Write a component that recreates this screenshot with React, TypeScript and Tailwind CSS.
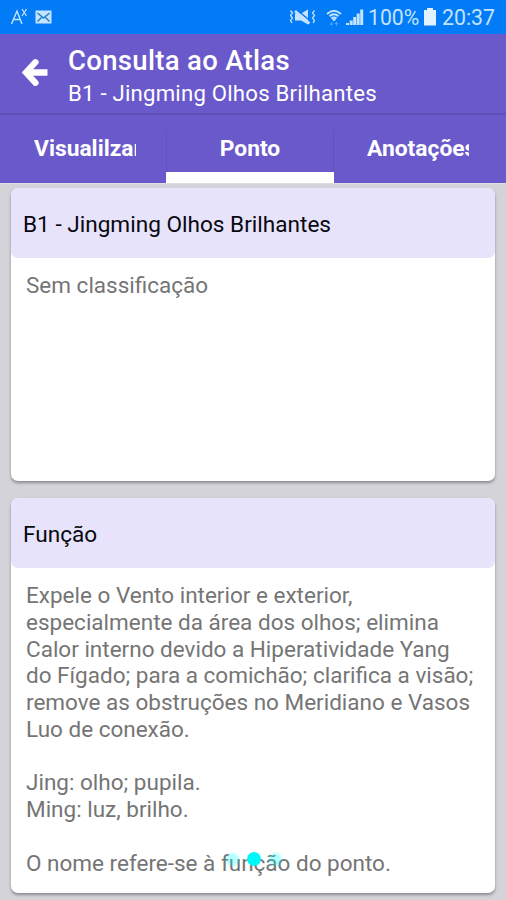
const functionLines = [
  "Expele o Vento interior e exterior,",
  "especialmente da área dos olhos; elimina",
  "Calor interno devido a Hiperatividade Yang",
  "do Fígado; para a comichão; clarifica a visão;",
  "remove as obstruções no Meridiano e Vasos",
  "Luo de conexão.",
  "",
  "Jing: olho; pupila.",
  "Ming: luz, brilho.",
  "",
  "O nome refere-se à função do ponto.",
];

function StatusBar() {
  return (
    <div className="flex h-[34px] shrink-0 items-center bg-[#027bf6] text-[#c3e3ff]">
      <svg className="ml-[10px]" width="19" height="18" viewBox="0 0 19 18" fill="none" stroke="currentColor">
        <path d="M1.500 16 7 3l5 13M3.500 11.500h7" strokeWidth="1.4" />
        <path d="m12 1 4.500 7m0-7L12 8" strokeWidth="1.3" />
      </svg>
      <svg className="ml-[6px]" width="17" height="14" viewBox="0 0 17 14">
        <rect x="0.5" y="0.5" width="16" height="13" fill="currentColor" />
        <path d="m2.500 3 6 5 6-5M2.500 11.500l4-4m8 4-4-4" fill="none" stroke="#247fca" strokeWidth="1.5" />
      </svg>
      <svg className="ml-auto" width="27" height="18" viewBox="0 0 27 18" fill="none" stroke="currentColor">
        <path
          d="M1.500 2.500 3.500 5l-2 2.500 2 2.500-2 2.500L3 15M25.500 2.500l-2 2.500 2 2.500-2 2.500 2 2.500L24 15"
          strokeWidth="1.3"
        />
        <path d="M6 5.500h6l7-4v15l-7-4H6z" fill="currentColor" stroke="none" />
        <path d="m8 2 14 11.500" stroke="#027bf6" strokeWidth="1.500" />
        <path d="m6 3 14.500 12.500" strokeWidth="2.500" />
      </svg>
      <svg className="ml-[9px]" width="18" height="19" viewBox="0 0 18 19" fill="none" stroke="currentColor">
        <path d="M2 6q7-6.500 14 0M4.500 8.300q4.500-4 9 0M6.500 10.500q2.500-2.200 5 0" strokeWidth="1.900" />
        <path d="m6.500 10.500 2.500 3 2.500-3z" fill="currentColor" stroke="none" />
        <path
          d="M6.500 14v3m-1.500-1.500 1.500 1.500L8 15.500M11.500 18v-3.500M10 16l1.500-1.500L13 16"
          strokeWidth="0.9"
          opacity="0.45"
        />
      </svg>
      <svg className="ml-[3px]" width="18" height="18" viewBox="0 0 18 18" fill="currentColor">
        <path d="M0 15h3v2H0zM3.700 12.500h3V17h-3zM7.200 9h3v8h-3zM10.700 5.500h3V17h-3zM14.200 1.500h3V17h-3z" />
      </svg>
      <span className="ml-[4px] w-[53px] whitespace-nowrap pt-px text-[21.200px] leading-none">100%</span>
      <svg className="ml-[3px]" width="12" height="18" viewBox="0 0 12 18" fill="#e2f2ff">
        <path d="M3 0h6v2h3v15.500H0V2h3z" />
      </svg>
      <span className="mr-[10px] ml-[6px] w-[54px] whitespace-nowrap pt-px text-[21.300px] leading-none">20:37</span>
    </div>
  );
}

function Header() {
  return (
    <header className="flex h-[79px] shrink-0 bg-[#6a59cb] text-white">
      <svg className="mt-[23px] ml-[21px] shrink-0" width="28" height="31" viewBox="0 0 28 31" fill="none" stroke="white">
        <path d="M26.500 15.500H6" strokeWidth="6.500" />
        <path d="M14.500 5.200 5 15.500l9.500 10.300" strokeWidth="6.200" strokeLinecap="round" strokeLinejoin="miter" />
      </svg>
      <div className="ml-[19px] whitespace-nowrap">
        <h1 className="mt-[10px] h-[34px] text-[27.500px] leading-[34px] font-medium tracking-[0.32px]">
          Consulta ao Atlas
        </h1>
        <p className="mt-px text-[22.200px] leading-[29px] tracking-[0.210px]">B1 - Jingming Olhos Brilhantes</p>
      </div>
    </header>
  );
}

function Tabs() {
  return (
    <nav className="flex h-[70px] shrink-0 border-t-2 border-[#5f4fb8] bg-[#6a59cb] text-[22.800px] leading-[68px] font-bold text-white">
      <div className="w-[166px] pl-[34px]">
        <div className="w-[102px] overflow-hidden whitespace-nowrap">Visualilzar</div>
      </div>
      <div className="flex w-[168px] flex-col">
        <div className="mt-[15px] h-[42px] border-x border-[#6252bd] text-center leading-[38px]">Ponto</div>
        <div className="h-[11px] bg-white" />
      </div>
      <div className="w-[172px] pl-[33px]">
        <div className="w-[102px] overflow-hidden whitespace-nowrap">Anotações</div>
      </div>
    </nav>
  );
}

type CardProps = {
  title: string;
  lines: string[];
  className: string;
};

function Card({ title, lines, className }: CardProps) {
  return (
    <section className={`rounded-[7px] bg-white shadow-[0_2px_3px_#8b8b91] ${className}`}>
      <h2 className="h-[70px] rounded-[7px] bg-[#e6e3fa] pl-[12px] text-[22.600px] leading-[73px] whitespace-nowrap text-[#08080f]">
        {title}
      </h2>
      <div className="pt-[14px] pl-[15px] text-[22.500px] leading-[26.750px] whitespace-nowrap text-[#757575]">
        {lines.map((line, index) => (
          <p key={index} className="h-[26.750px]">
            {line}
          </p>
        ))}
      </div>
    </section>
  );
}

export default function App() {
  return (
    <div className="relative flex h-[900px] w-[506px] flex-col overflow-hidden bg-[#d4d3da] font-[Roboto,sans-serif]">
      <StatusBar />
      <Header />
      <Tabs />
      <main className="flex flex-col gap-[17px] border-t border-[#dedee1] pt-[4px] pr-[11px] pl-[11px]">
        <Card title="B1 - Jingming Olhos Brilhantes" lines={["Sem classificação"]} className="h-[293px]" />
        <Card title="Função" lines={functionLines} className="h-[395px]" />
      </main>
      <div className="absolute top-[852px] left-[226px] flex items-center gap-[8px]">
        <span className="size-[13px] rounded-full bg-[#00ffff]/30 blur-[1px]" />
        <span className="size-[14px] rounded-full bg-[#00f7fa]" />
        <span className="size-[13px] rounded-full bg-[#00ffff]/30 blur-[1px]" />
      </div>
    </div>
  );
}
